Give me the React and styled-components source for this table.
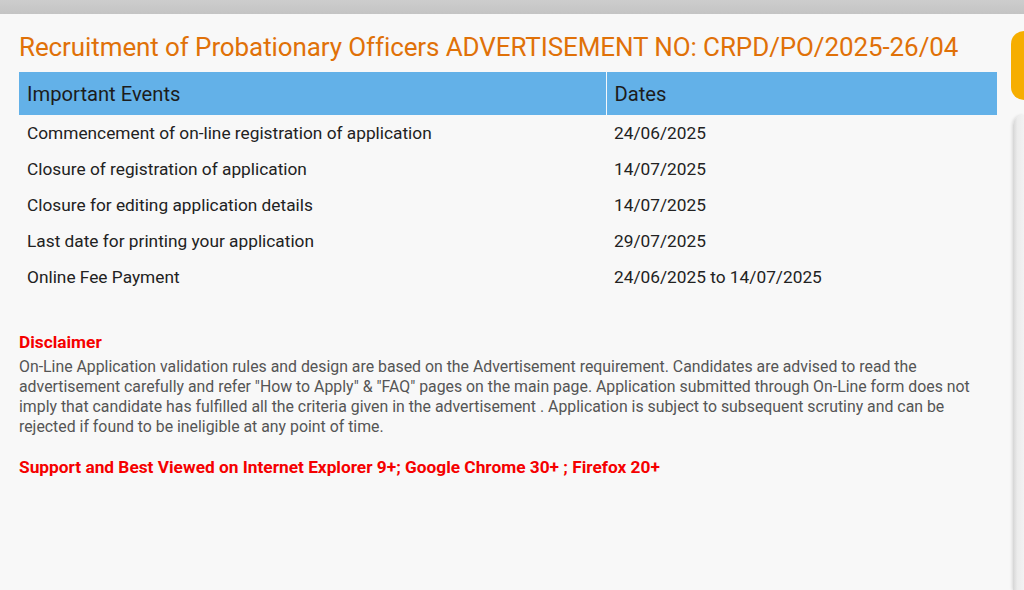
import React from 'react'
import styled, { createGlobalStyle } from 'styled-components'

const GlobalStyle = createGlobalStyle`
  html, body {
    margin: 0;
    padding: 0;
    background: #f8f8f8;
    font-family: Roboto, "Liberation Sans", Arial, sans-serif;
    overflow: hidden;
  }
`;

const Page = styled.div`
  width: 1024px;
  height: 590px;
  display: flex;
  flex-direction: column;
  background: #f8f8f8;
`;

const TopBar = styled.div`
  height: 14px;
  background: linear-gradient(#cdcdcd, #c4c4c4);
  flex-shrink: 0;
`;

const Body = styled.div`
  flex: 1;
  display: flex;
  min-height: 0;
`;

const Content = styled.main`
  width: 978px;
  padding-left: 19px;
`;

const Title = styled.h2`
  margin: 18px 0 0 0;
  font-size: 26px;
  font-weight: 400;
  line-height: 30px;
  color: #e07108;
  letter-spacing: -0.1px;
`;

const Table = styled.table`
  width: 978px;
  margin-top: 10px;
  border-collapse: collapse;
  table-layout: fixed;
`;

const HeadCell = styled.th`
  background: #63b1e8;
  color: #1c1c1c;
  font-size: 20.2px;
  font-weight: 400;
  text-align: left;
  height: 43px;
  padding: 0 0 0 8px;
  border-left: ${({ $divider }) => ($divider ? '1px solid #f4f8fb' : 'none')};
`;

const Cell = styled.td`
  font-size: 17.3px;
  color: #222;
  height: 36px;
  padding: 0 0 0 8px;
  vertical-align: middle;
`;

const Disclaimer = styled.section`
  margin-top: 37px;
`;

const RedHeading = styled.div`
  color: #f50000;
  font-weight: 700;
  font-size: 17.3px;
  line-height: 20px;
`;

const Note = styled.p`
  margin: 5px 0 0 0;
  font-size: 15.85px;
  line-height: 20px;
  color: #555;
  width: 970px;
`;

const Support = styled(RedHeading)`
  margin-top: 20px;
`;

const SideRail = styled.aside`
  margin-left: 14px;
  width: 13px;
  display: flex;
  flex-direction: column;
`;

const OrangeTab = styled.div`
  margin-top: 17px;
  height: 69px;
  background: #f6ae00;
  border-radius: 14px 0 0 14px;
`;

const GreyPanel = styled.div`
  margin-top: 15px;
  margin-left: 2px;
  flex: 1;
  background: linear-gradient(90deg, #d6d6d6, #ececec 40%, #f2f2f2);
  border-radius: 10px 0 0 0;
  box-shadow: -1px 0 3px rgba(0, 0, 0, 0.12);
`;

const events = [
  ['Commencement of on-line registration of application', '24/06/2025'],
  ['Closure of registration of application', '14/07/2025'],
  ['Closure for editing application details', '14/07/2025'],
  ['Last date for printing your application', '29/07/2025'],
  ['Online Fee Payment', '24/06/2025 to 14/07/2025'],
];

const App = () => {
  return (
    <>
      <GlobalStyle />
      <Page>
        <TopBar />
        <Body>
          <Content>
            <Title>Recruitment of Probationary Officers ADVERTISEMENT NO: CRPD/PO/2025-26/04</Title>
            <Table>
              <colgroup>
                <col style={{ width: '587px' }} />
                <col />
              </colgroup>
              <thead>
                <tr>
                  <HeadCell>Important Events</HeadCell>
                  <HeadCell $divider>Dates</HeadCell>
                </tr>
              </thead>
              <tbody>
                {events.map(([name, date]) => (
                  <tr key={name}>
                    <Cell>{name}</Cell>
                    <Cell>{date}</Cell>
                  </tr>
                ))}
              </tbody>
            </Table>
            <Disclaimer>
              <RedHeading>Disclaimer</RedHeading>
              <Note>
                On-Line Application validation rules and design are based on the Advertisement requirement. Candidates are advised to read the advertisement carefully and refer "How to Apply" &amp; "FAQ" pages on the main page. Application submitted through On-Line form does not imply that candidate has fulfilled all the criteria given in the advertisement . Application is subject to subsequent scrutiny and can be rejected if found to be ineligible at any point of time.
              </Note>
              <Support>Support and Best Viewed on Internet Explorer 9+; Google Chrome 30+ ; Firefox 20+</Support>
            </Disclaimer>
          </Content>
          <SideRail>
            <OrangeTab />
            <GreyPanel />
          </SideRail>
        </Body>
      </Page>
    </>
  )
}

export default App
